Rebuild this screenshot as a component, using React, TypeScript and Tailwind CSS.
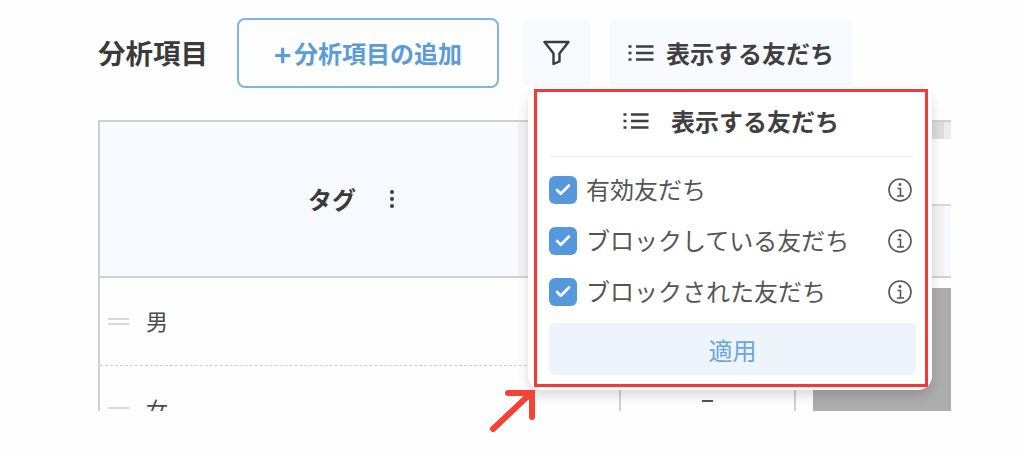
import { Check } from "lucide-react";

const friends = ["有効友だち", "ブロックしている友だち", "ブロックされた友だち"];
const font = "font-['Noto_Sans_CJK_JP','Noto_Sans',sans-serif]";

function ListIcon() {
  return (
    <svg width="26" height="18" viewBox="0 0 26 18" fill="none" stroke="currentColor" strokeWidth="2.5">
      <path d="M0.5 2.5H3.5M0.5 9H3.5M0.5 15.5H3.5M8 2.5H25.5M8 9H25.5M8 15.5H25.5" />
    </svg>
  );
}

function FilterIcon() {
  return (
    <svg width="27" height="26" viewBox="0 0 27 26" fill="none" stroke="currentColor" strokeWidth="2.4" strokeLinejoin="round">
      <path d="M1.5 2H25.5L16.5 13.5V21.5L10.5 24V13.5Z" />
    </svg>
  );
}

function InfoIcon() {
  return (
    <svg className="mr-[1px]" width="24" height="24" viewBox="0 0 24 24" fill="none" stroke="#555555" strokeWidth="1.6">
      <circle cx="12" cy="12" r="11" />
      <path d="M9.5 10.5H12.5V18M9 18H16" />
      <circle cx="12" cy="6.5" r="1.4" fill="#555555" stroke="none" />
    </svg>
  );
}

function TagRow({ label, dashed }: { label: string; dashed?: boolean }) {
  return (
    <div className={`flex h-[88px] items-center pl-[8px] ${dashed ? "border-b border-dashed border-[#cfcfcf]" : ""}`}>
      <div className="flex h-[7px] w-[21px] flex-col justify-between">
        <div className="h-[2px] bg-[#d8d8d8]" />
        <div className="h-[2px] bg-[#d8d8d8]" />
      </div>
      <span className="ml-[17px] pb-[4px] text-[22px] leading-none text-[#4a4a4a]">{label}</span>
    </div>
  );
}

export default function App() {
  return (
    <div className={`relative h-[456px] w-[1024px] overflow-hidden bg-[#fefefe] pl-[98px] pt-[18px] ${font}`}>
      <div className="flex h-[70px] items-center">
        <h1 className="w-[109px] text-[27.5px] font-bold leading-none whitespace-nowrap text-[#3a3a3a]">分析項目</h1>
        <button className="ml-[30px] flex h-[70px] w-[262px] items-center justify-center rounded-[8px] border-2 border-[#7db4e6] text-[24px] font-bold text-[#5b9bd8]">
          <span className="mr-[3px] text-[29px] leading-none font-bold">+</span>分析項目の追加
        </button>
        <button className="ml-[23px] flex h-[68px] w-[69px] items-center justify-center rounded-[8px] bg-[#f7faff] text-[#3a3a3a]">
          <FilterIcon />
        </button>
        <button className="ml-[18px] flex h-[68px] w-[244px] items-center justify-center gap-[12px] rounded-[8px] bg-[#f7faff] text-[24px] font-bold text-[#3f3f3f]">
          <ListIcon />
          表示する友だち
        </button>
      </div>

      <div className="mt-[32px] flex h-[291px] w-[853px] overflow-hidden border-l-2 border-t-2 border-[#d0d0d0]">
        <div className="w-[432px] shrink-0">
          <div className="flex h-[156px] border-b-2 border-[#d0d0d0]">
            <div className="flex w-[418px] items-center gap-[34px] bg-[#f7faff] pl-[208px] text-[24px] font-bold text-[#3a3a3a]">
              タグ
              <span className="flex flex-col gap-[3px]">
                <i className="size-[4px] rounded-full bg-[#3a3a3a]" />
                <i className="size-[4px] rounded-full bg-[#3a3a3a]" />
                <i className="size-[4px] rounded-full bg-[#3a3a3a]" />
              </span>
            </div>
            <div className="flex-1 bg-[#f3f3f3]" />
          </div>
          <TagRow label="男" dashed />
          <TagRow label="女" />
        </div>
        <div className="flex h-full flex-1 flex-col">
          <div className="flex h-[17px] justify-end">
            <div className="w-[13px] bg-[#dcdcdc]" />
            <div className="w-[7px] bg-[#ececec]" />
          </div>
          <div className="h-[67px] border-b-2 border-[#d8d8d8]" />
          <div className="flex h-[72px] justify-end border-b-2 border-[#d0d0d0] bg-[#f7faff]">
            <div className="mr-[7px] w-[13px] bg-[#f3f3f3]" />
          </div>
          <div className="flex flex-1">
            <div className="w-[89px] border-r-2 border-[#d0d0d0]" />
            <div className="flex w-[175px] justify-center border-r-2 border-[#d0d0d0] pt-[122px]">
              <div className="h-[2px] w-[11px] bg-[#555555]" />
            </div>
            <div className="ml-[17px] mt-[10px] flex-1 bg-[#adadad]" />
          </div>
        </div>
      </div>

      <div className="absolute left-[528px] top-[88px] h-[302px] w-[404px] rounded-[14px] bg-white shadow-[0_6px_12px_rgba(0,0,0,0.14)]" />
      <div className="absolute left-[534px] top-[89px] flex h-[298px] w-[394px] flex-col border-[3px] border-[#f53838] bg-white px-[12px]">
        <div className="flex h-[65px] shrink-0 items-center justify-center gap-[22px] border-b border-[#eeeeee] pb-[6px] text-[24px] font-bold text-[#3f3f3f]">
          <ListIcon />
          表示する友だち
        </div>
        <div className="flex flex-col gap-[23px] pt-[19px]">
          {friends.map((name) => (
            <div key={name} className="flex h-[28px] items-center">
              <span className="flex size-[28px] items-center justify-center rounded-[6px] bg-[#5598dc]">
                <Check size={18} strokeWidth={3.5} className="text-white" />
              </span>
              <span className="ml-[9px] flex-1 pb-[3px] text-[24px] leading-none text-[#555555]">{name}</span>
              <InfoIcon />
            </div>
          ))}
        </div>
        <button className="mt-[17px] -mr-[3px] h-[52px] rounded-[6px] bg-[#edf4fc] pt-[2px] text-[24px] text-[#6aa5e0]">適用</button>
      </div>

      <svg className="absolute left-[488px] top-[387px]" width="50" height="48" viewBox="0 0 50 48" fill="none">
        <path d="M5 42L43 6M20 6H44V30" stroke="#f44336" strokeWidth="6" strokeLinecap="round" strokeLinejoin="miter" />
      </svg>
    </div>
  );
}
